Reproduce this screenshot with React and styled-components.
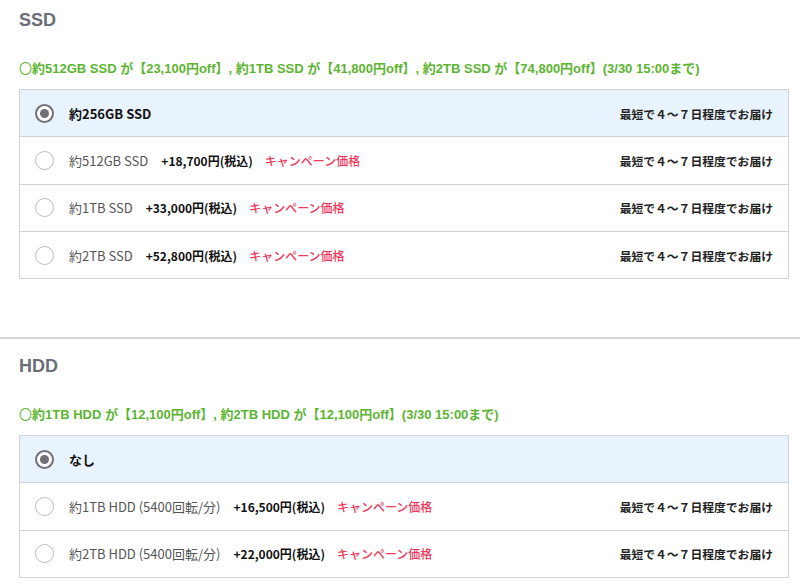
import React from "react";
import styled, { createGlobalStyle } from "styled-components";

const Global = createGlobalStyle`
  body {
    margin: 0;
    background: #fff;
    font-family: "Liberation Sans", "Noto Sans CJK JP", sans-serif;
  }
`;

const Page = styled.div`
  width: 800px;
`;

const Section = styled.section`
  padding: 0 11px 0 19px;
  border-bottom: ${(p) => (p.$divider ? "2px solid #d4d4d8" : "none")};
  padding-bottom: ${(p) => (p.$divider ? "58px" : "0")};
`;

const Heading = styled.h2`
  margin: 0;
  padding-top: ${(p) => (p.$top ? p.$top : "7px")};
  font-size: 18px;
  line-height: 26px;
  font-weight: 700;
  color: #6b6e78;
`;

const Notice = styled.p`
  margin: 26px 0 10px;
  font-size: 13px;
  line-height: 20px;
  font-weight: 700;
  color: #5cb532;
  white-space: nowrap;
  span {
    font-weight: 400;
  }
`;

const Box = styled.div`
  border: 1px solid #cfd2d6;
`;

const Row = styled.label`
  display: flex;
  align-items: center;
  height: 46.3px;
  padding: 0 15px 0 15px;
  font-family: "Noto Sans CJK JP", "Noto Sans", sans-serif;
  background: ${(p) => (p.$checked ? "#e9f3fd" : "#fff")};
  & + & {
    border-top: 1px solid #cfd2d6;
  }
`;

const Radio = styled.span`
  box-sizing: border-box;
  width: 19px;
  height: 19px;
  border-radius: 50%;
  border: ${(p) => (p.$checked ? "2px solid #6f6f75" : "1.5px solid #b9bcc2")};
  background: #fff;
  display: flex;
  align-items: center;
  justify-content: center;
  margin-right: 15px;
  flex-shrink: 0;
  &::after {
    content: "";
    display: ${(p) => (p.$checked ? "block" : "none")};
    width: 9px;
    height: 9px;
    border-radius: 50%;
    background: #6f6f75;
  }
`;

const Label = styled.span`
  font-size: 13px;
  color: ${(p) => (p.$checked ? "#111" : "#555")};
  font-weight: ${(p) => (p.$checked ? 700 : 400)};
  margin-right: 13px;
`;

const Price = styled.span`
  font-size: 12px;
  font-weight: 700;
  color: #111;
  margin-right: 12px;
`;

const Campaign = styled.span`
  font-size: 12px;
  font-weight: 500;
  color: #f0385c;
`;

const Delivery = styled.span`
  margin-left: auto;
  font-size: 11.8px;
  font-weight: 700;
  color: #222;
`;

const delivery = "最短で４～７日程度でお届け";

const ssd = [
  { label: "約256GB SSD", checked: true },
  { label: "約512GB SSD", price: "+18,700円(税込)" },
  { label: "約1TB SSD", price: "+33,000円(税込)" },
  { label: "約2TB SSD", price: "+52,800円(税込)" },
];

const hdd = [
  { label: "なし", checked: true, noDelivery: true },
  { label: "約1TB HDD (5400回転/分)", price: "+16,500円(税込)" },
  { label: "約2TB HDD (5400回転/分)", price: "+22,000円(税込)" },
];

const Options = ({ items }) => (
  <Box>
    {items.map((it) => (
      <Row key={it.label} $checked={it.checked}>
        <Radio $checked={it.checked} />
        <Label $checked={it.checked}>{it.label}</Label>
        {it.price && <Price>{it.price}</Price>}
        {it.price && <Campaign>キャンペーン価格</Campaign>}
        {!it.noDelivery && <Delivery>{delivery}</Delivery>}
      </Row>
    ))}
  </Box>
);

export default function App() {
  return (
    <Page>
      <Global />
      <Section $divider>
        <Heading>SSD</Heading>
        <Notice>
          <span>〇</span>約512GB SSD が【23,100円off】, 約1TB SSD が【41,800円off】, 約2TB SSD が【74,800円off】(3/30 15:00まで)
        </Notice>
        <Options items={ssd} />
      </Section>
      <Section>
        <Heading $top="14px">HDD</Heading>
        <Notice>
          <span>〇</span>約1TB HDD が【12,100円off】, 約2TB HDD が【12,100円off】(3/30 15:00まで)
        </Notice>
        <Options items={hdd} />
      </Section>
    </Page>
  );
}
